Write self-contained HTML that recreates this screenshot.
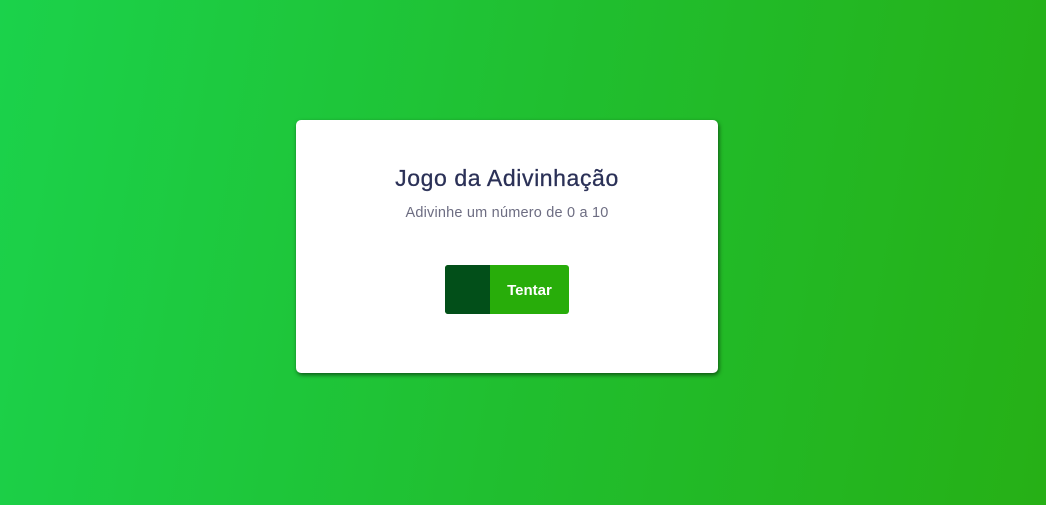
<!DOCTYPE html>
<html><head><style>
html,body{margin:0;width:1046px;height:505px;overflow:hidden}
body{background:linear-gradient(100deg,#1bd24b 0%,#20bf30 50%,#26b016 100%);font-family:"Liberation Sans",sans-serif;position:relative}
.card{position:absolute;left:296px;top:120px;width:422px;height:253px;background:#fff;border-radius:5px;box-shadow:1px 2px 4px rgba(0,0,0,.55)}
h1{position:absolute;top:45px;left:0;width:100%;text-align:center;margin:0;font-size:23px;letter-spacing:0.6px;font-weight:normal;color:#2b3157;line-height:26px;-webkit-text-stroke:.3px #2b3157}
p{position:absolute;top:85px;left:0;width:100%;text-align:center;margin:0;font-size:14.5px;letter-spacing:0.2px;color:#6d6d82;line-height:16px}
.btn{position:absolute;left:149px;top:145px;width:124px;height:49px;border-radius:3px;overflow:hidden;background:#28ad0a}
.d{position:absolute;left:0;top:0;width:45px;height:49px;background:#024f19}
.t{position:absolute;left:45px;right:0;top:0;line-height:51px;text-align:center;color:#fff;font-weight:bold;font-size:15px}
</style></head><body>
<div class="card">
<h1>Jogo da Adivinhação</h1>
<p>Adivinhe um número de 0 a 10</p>
<div class="btn"><div class="d"></div><div class="t">Tentar</div></div>
</div>
</body></html>
